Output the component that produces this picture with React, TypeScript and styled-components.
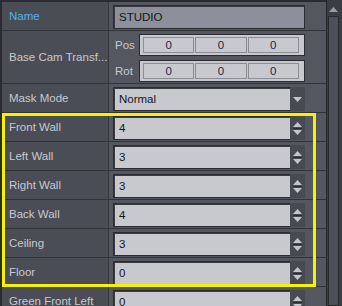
import styled, { createGlobalStyle } from "styled-components";

const GlobalStyle = createGlobalStyle`
  body {
    margin: 0;
    background: #2a2b30;
    overflow: hidden;
  }
`;

const Frame = styled.div`
  display: flex;
  width: 342px;
  height: 306px;
  overflow: hidden;
  font-family: "Liberation Sans", Arial, sans-serif;
  font-size: 11.5px;
  background: #2a2b30;
`;

const Panel = styled.div`
  flex: 1;
  display: flex;
  flex-direction: column;
  padding: 2px 0 0 2px;
  min-width: 0;
`;

const Row = styled.div<{ $tall?: boolean }>`
  display: grid;
  grid-template-columns: 107px 1fr;
  height: ${(p) => (p.$tall ? 53 : 29)}px;
  flex-shrink: 0;
  box-sizing: border-box;
  border-bottom: 1px solid #313339;
`;

const Label = styled.div<{ $active?: boolean }>`
  display: flex;
  align-items: center;
  padding-left: 7px;
  background: #4a4d56;
  color: ${(p) => (p.$active ? "#4fb5e6" : "#c6c9d0")};
  border-right: 1px solid #35373d;
  white-space: nowrap;
`;

const Cell = styled.div`
  display: flex;
  flex-direction: column;
  justify-content: center;
  gap: 4px;
  padding: 2px 21px 0 4px;
  background: #545760;
`;

const Field = styled.div<{ $dim?: boolean }>`
  display: flex;
  align-items: center;
  height: 24px;
  box-sizing: border-box;
  padding-left: 5px;
  background: ${(p) => (p.$dim ? "#8d909a" : "#c8c9ce")};
  border: 1px solid #2a2c31;
  box-shadow: inset 1px 1px 0 #3a3c42;
  color: #141518;
  position: relative;
`;

const SideButton = styled.div`
  position: absolute;
  right: -1px;
  top: -1px;
  bottom: -1px;
  width: 15px;
  background: #474a52;
  display: flex;
  flex-direction: column;
  align-items: center;
  justify-content: center;
  gap: 1px;
`;

const Divider = styled.div`
  width: 9px;
  height: 1px;
  background: #2a2c31;
`;

const VecLine = styled.div`
  display: flex;
  align-items: center;
`;

const VecTag = styled.div`
  width: 24px;
  padding-left: 2px;
  color: #c6c9d0;
`;

const VecBox = styled.div`
  flex: 1;
  display: flex;
  gap: 1px;
  height: 22px;
  box-sizing: border-box;
  padding: 2px 5px 2px 3px;
  background: #c8c9ce;
  border: 1px solid #2a2c31;
`;

const VecItem = styled.div`
  flex: 1;
  display: flex;
  align-items: center;
  justify-content: center;
  border: 1px solid #8b8d93;
  color: #1c2550;
`;

const Group = styled.div`
  position: relative;
  display: flex;
  flex-direction: column;
`;

const Highlight = styled.div`
  position: absolute;
  left: 0;
  top: 0;
  right: 10px;
  bottom: 0;
  border: 3px solid #f7f200;
  pointer-events: none;
`;

const Scrollbar = styled.div`
  width: 16px;
  flex-shrink: 0;
  display: flex;
  flex-direction: column;
  align-items: center;
  background: #3b3d44;
  border-left: 1px solid #25262a;
  box-sizing: border-box;
  padding: 7px 3px 0 1px;
  gap: 4px;
`;

const Thumb = styled.div`
  width: 11px;
  flex: 1;
  background: #4d5059;
  border: 1px solid #26272b;
  box-sizing: border-box;
`;

const Arrow = ({ up, color = "#c3c5cb" }: { up?: boolean; color?: string }) => (
  <svg width="9" height="5" viewBox="0 0 9 5">
    <path d={up ? "M0 5 L4.5 0 L9 5 Z" : "M0 0 L9 0 L4.5 5 Z"} fill={color} />
  </svg>
);

const Spinner = () => (
  <SideButton>
    <Arrow up />
    <Divider />
    <Arrow />
  </SideButton>
);

const walls = [
  ["Front Wall", "4"],
  ["Left Wall", "3"],
  ["Right Wall", "3"],
  ["Back Wall", "4"],
  ["Ceiling", "3"],
  ["Floor", "0"],
];

const Vector = ({ tag }: { tag: string }) => (
  <VecLine>
    <VecTag>{tag}</VecTag>
    <VecBox>
      <VecItem>0</VecItem>
      <VecItem>0</VecItem>
      <VecItem>0</VecItem>
    </VecBox>
  </VecLine>
);

export default function App() {
  return (
    <>
      <GlobalStyle />
      <Frame>
        <Panel>
          <Row>
            <Label $active>Name</Label>
            <Cell>
              <Field $dim>STUDIO</Field>
            </Cell>
          </Row>
          <Row $tall>
            <Label>Base Cam Transf...</Label>
            <Cell>
              <Vector tag="Pos" />
              <Vector tag="Rot" />
            </Cell>
          </Row>
          <Row>
            <Label>Mask Mode</Label>
            <Cell>
              <Field>
                Normal
                <SideButton>
                  <Arrow />
                </SideButton>
              </Field>
            </Cell>
          </Row>
          <Group>
            {walls.map(([name, value]) => (
              <Row key={name}>
                <Label>{name}</Label>
                <Cell>
                  <Field>
                    {value}
                    <Spinner />
                  </Field>
                </Cell>
              </Row>
            ))}
            <Highlight />
          </Group>
          <Row>
            <Label>Green Front Left</Label>
            <Cell>
              <Field>
                0
                <Spinner />
              </Field>
            </Cell>
          </Row>
        </Panel>
        <Scrollbar>
          <Arrow up color="#9a9ca3" />
          <Thumb />
        </Scrollbar>
      </Frame>
    </>
  );
}
